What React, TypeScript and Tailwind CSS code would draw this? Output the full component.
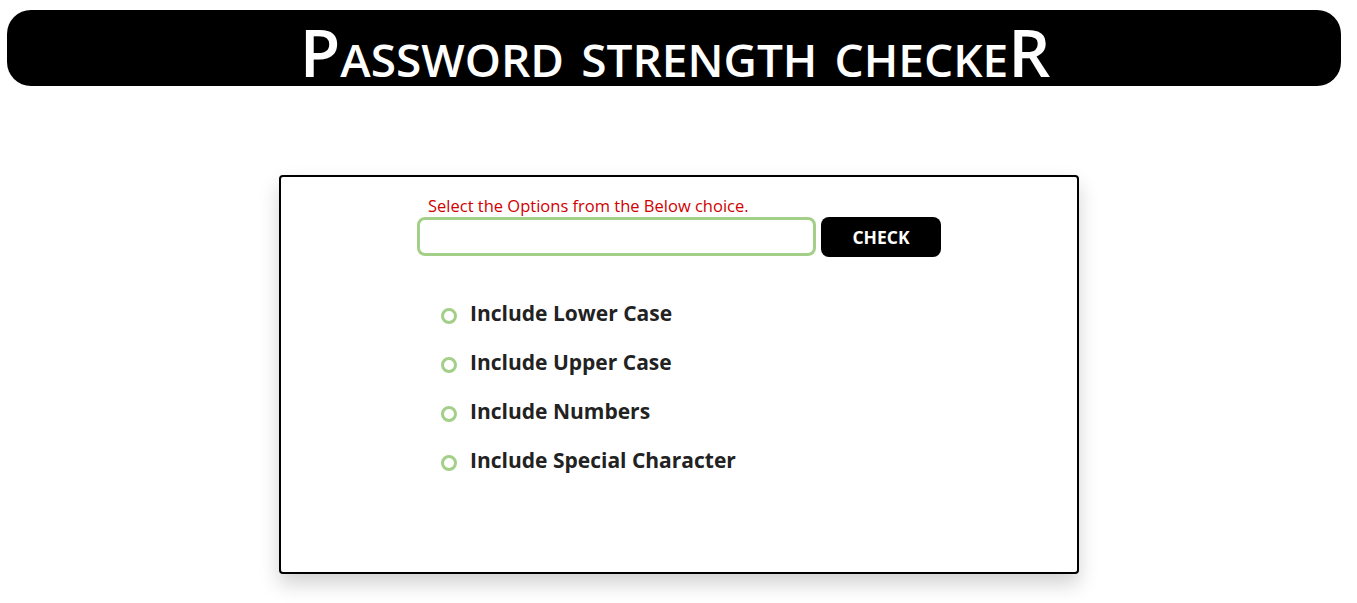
export default function App() {
  const items = [
    "Include Lower Case",
    "Include Upper Case",
    "Include Numbers",
    "Include Special Character",
  ];
  return (
    <div className="min-h-screen bg-white pt-[10px]" style={{ fontFamily: '"Open Sans", "Noto Sans", sans-serif' }}>
      <div className="mx-[7px] mr-[16px] h-[76px] rounded-[24px] bg-black flex items-center justify-center">
        <h1 className="text-white text-[66px] leading-none [font-variant:small-caps] font-semibold mt-[6px] ml-[2px]">
          Password strength checkeR
        </h1>
      </div>
      <div className="flex justify-center mt-[89px]">
        <div className="w-[800px] h-[399px] border-2 border-black rounded-[4px] bg-white shadow-[0_10px_20px_rgba(0,0,0,0.18)] ml-[1px]">
          <div className="flex flex-col items-center pt-[18px]">
            <div className="w-[524px]">
              <div className="text-[#d00000] text-[16.5px] leading-[22px] pl-[11px]">
                Select the Options from the Below choice.
              </div>
              <div className="flex gap-[5px]">
                <input className="w-[399px] h-[39px] border-[3px] border-[#a3cf88] rounded-[8px] outline-none px-2" />
                <button className="w-[120px] h-[40px] bg-black text-white font-bold text-[17.5px] rounded-[8px]">
                  CHECK
                </button>
              </div>
            </div>
          </div>
          <ul className="mt-[42px] ml-[160px] flex flex-col gap-[20px]">
            {items.map((t) => (
              <li key={t} className="flex items-center h-[29px]">
                <span className="w-[16px] h-[16px] rounded-full border-[3px] border-[#a3cf88] mt-[5px]" />
                <span className="ml-[13px] text-[21px] font-bold text-[#222222]">{t}</span>
              </li>
            ))}
          </ul>
        </div>
      </div>
    </div>
  );
}
